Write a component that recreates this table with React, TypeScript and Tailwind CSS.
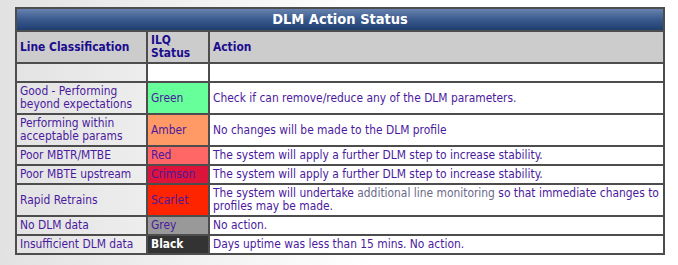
const rows = [
  {
    cls: "Good - Performing beyond expectations",
    status: "Green",
    bg: "bg-[#66ff99]",
    action: <>Check if can remove/reduce any of the DLM parameters.</>,
  },
  {
    cls: "Performing within acceptable params",
    status: "Amber",
    bg: "bg-[#ff9966]",
    action: <>No changes will be made to the DLM profile</>,
  },
  {
    cls: "Poor MBTR/MTBE",
    status: "Red",
    bg: "bg-[#ff6666]",
    action: <>The system will apply a further DLM step to increase stability.</>,
  },
  {
    cls: "Poor MBTE upstream",
    status: "Crimson",
    bg: "bg-[#dc143c]",
    action: <>The system will apply a further DLM step to increase stability.</>,
  },
  {
    cls: "Rapid Retrains",
    status: "Scarlet",
    bg: "bg-[#ff2400]",
    action: (
      <>
        The system will undertake <span className="text-[#6a6a8a]">additional line monitoring</span> so that
        immediate changes to
        <br />
        profiles may be made.
      </>
    ),
  },
  {
    cls: "No DLM data",
    status: "Grey",
    bg: "bg-[#999999]",
    action: <>No action.</>,
  },
  {
    cls: "Insufficient DLM data",
    status: "Black",
    bg: "bg-[#333333]",
    action: <>Days uptime was less than 15 mins. No action.</>,
  },
];

const cell = "border-2 border-[#4d4d4d] px-[3px] py-[2px] align-middle";

export default function App() {
  return (
    <div className="w-[678px] h-[265px] bg-gradient-to-r from-[#e2e2e2] to-white to-[55%] pt-[7px] pl-[15px] font-['DejaVu_Sans_Condensed','DejaVu_Sans',sans-serif] font-stretch-condensed text-[11.9px] leading-[13px] text-[#4a1a9e]">
      <table className="w-[650px] border-collapse table-fixed">
        <colgroup>
          <col className="w-[131px]" />
          <col className="w-[62px]" />
          <col />
        </colgroup>
        <thead>
          <tr>
            <th
              colSpan={3}
              className="border-2 border-[#4d4d4d] bg-gradient-to-b from-[#6782ae] via-[#3a5a8e] to-[#1f3e70] text-white text-[14.5px] leading-[17px] font-bold py-[2px] text-center"
            >
              DLM Action Status
            </th>
          </tr>
          <tr className="bg-[#cccccc] text-[#1b0d8e] font-bold text-left">
            <th className={cell + " text-left"}>Line Classification</th>
            <th className={cell + " text-left"}>
              ILQ
              <br />
              Status
            </th>
            <th className={cell + " text-left"}>Action</th>
          </tr>
        </thead>
        <tbody>
          <tr>
            <td className={cell}>&nbsp;</td>
            <td className={cell + " bg-white"}>&nbsp;</td>
            <td className={cell + " bg-white"}>&nbsp;</td>
          </tr>
          {rows.map((r) => (
            <tr key={r.status}>
              <td className={cell}>{r.cls}</td>
              <td
                className={
                  cell +
                  " " +
                  r.bg +
                  (r.status === "Black" ? " text-white font-bold" : "")
                }
              >
                {r.status}
              </td>
              <td className={cell + " bg-white"}>{r.action}</td>
            </tr>
          ))}
        </tbody>
      </table>
    </div>
  );
}
